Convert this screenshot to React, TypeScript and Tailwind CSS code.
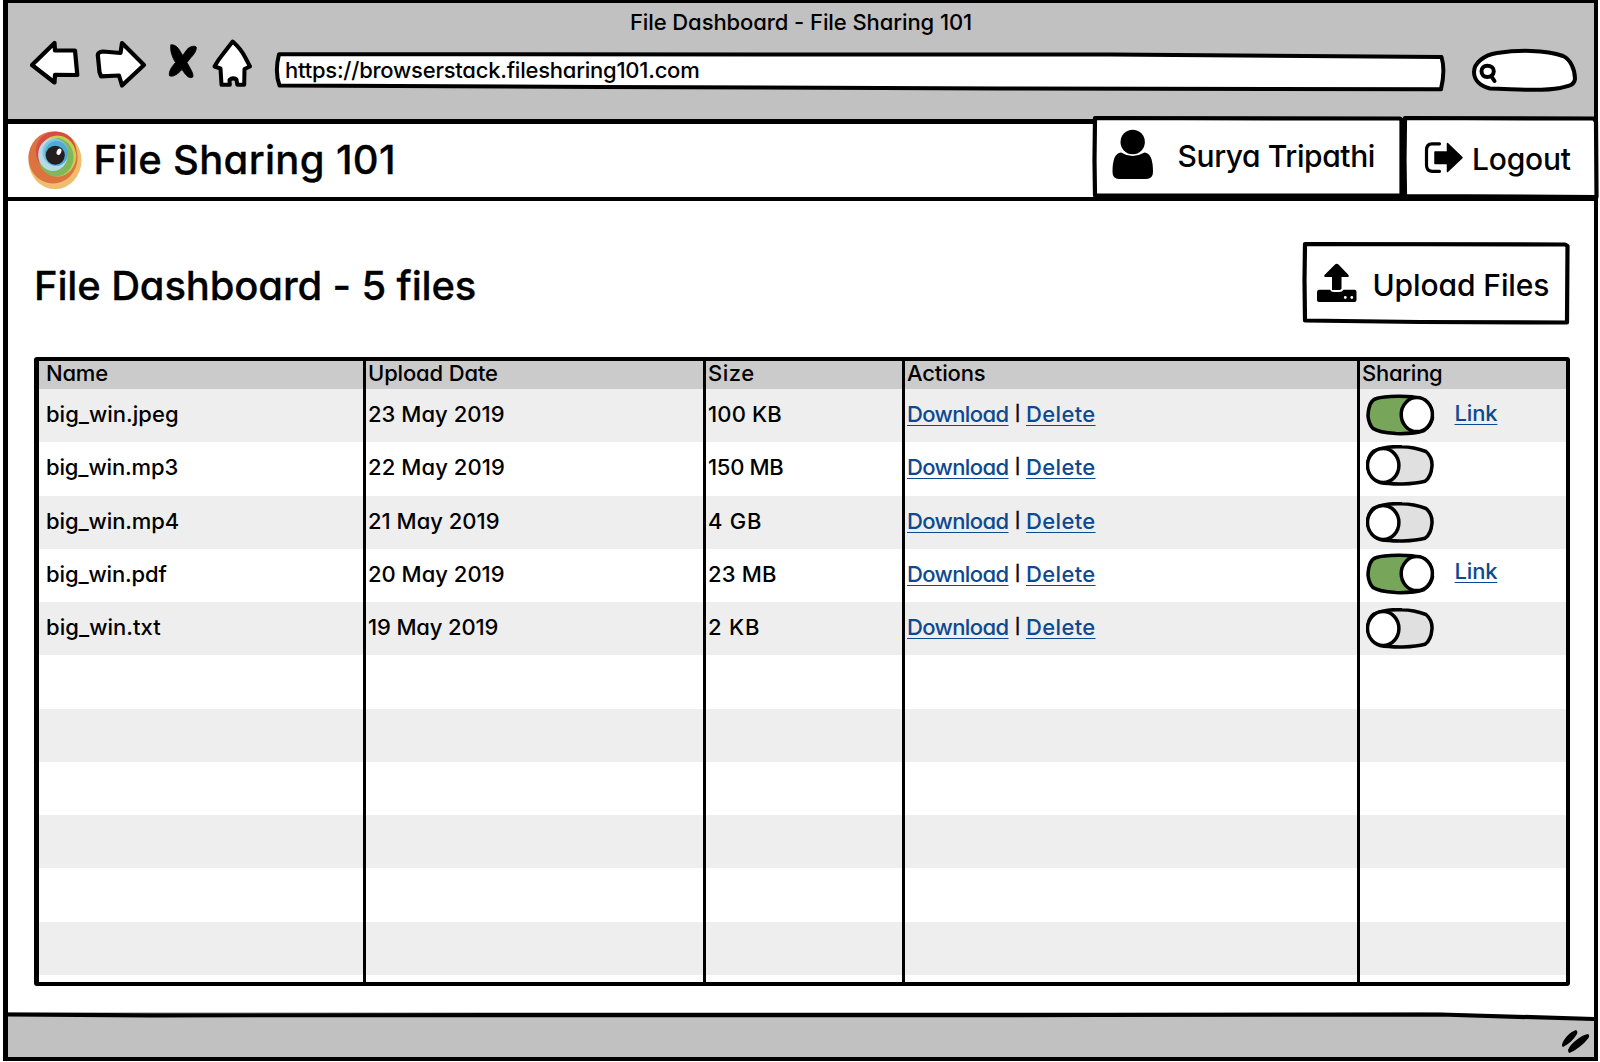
import type { ReactNode } from "react";

type FileRow = {
  name: string;
  nameCls: string;
  date: string;
  dateCls: string;
  size: string;
  sizeCls: string;
  shared: boolean;
  toggleCls: string;
  linkCls: string;
};

const files: FileRow[] = [
  { name: "big_win.jpeg", nameCls: "tracking-[0.02px]", date: "23 May 2019", dateCls: "tracking-[0.04px]", size: "100 KB", sizeCls: "tracking-[0.15px]", shared: true, toggleCls: "mt-[5px]", linkCls: "leading-[48px]" },
  { name: "big_win.mp3", nameCls: "tracking-[-0.14px]", date: "22 May 2019", dateCls: "tracking-[0.1px]", size: "150 MB", sizeCls: "tracking-[-0.3px]", shared: false, toggleCls: "mt-[3px]", linkCls: "" },
  { name: "big_win.mp4", nameCls: "tracking-[-0.1px]", date: "21 May 2019", dateCls: "tracking-[0px]", size: "4 GB", sizeCls: "tracking-[0.75px]", shared: false, toggleCls: "mt-[6.5px]", linkCls: "" },
  { name: "big_win.pdf", nameCls: "tracking-[-0.13px]", date: "20 May 2019", dateCls: "tracking-[0px]", size: "23 MB", sizeCls: "tracking-[0.2px]", shared: true, toggleCls: "mt-[4px]", linkCls: "leading-[44px]" },
  { name: "big_win.txt", nameCls: "tracking-[0.05px]", date: "19 May 2019", dateCls: "tracking-[-0.15px]", size: "2 KB", sizeCls: "tracking-[0.82px]", shared: false, toggleCls: "mt-[6px]", linkCls: "" },
];

const emptyRows = [5, 6, 7, 8, 9, 10];
const grid = "grid grid-cols-[324px_340px_199px_455px_1fr]";
const cell = "border-l-[3px] border-black pl-[2px]";

function Sketch({ box, cls, children }: { box: string; cls: string; children: ReactNode }) {
  return (
    <svg viewBox={box} className={cls} fill="none" stroke="#000" strokeLinejoin="round" strokeLinecap="round">
      {children}
    </svg>
  );
}

function Eye() {
  return (
    <svg viewBox="28 130 54 60" className="mt-[6px] ml-[20px] h-[60px] w-[54px] shrink-0">
      <ellipse cx="55" cy="160.3" rx="26.5" ry="28.8" fill="#f0bc6e" />
      <ellipse cx="53" cy="157.6" rx="24.6" ry="26" fill="#dc7440" />
      <ellipse cx="56" cy="151.5" rx="20.3" ry="20" fill="#d94b45" />
      <ellipse cx="57.4" cy="156" rx="18.8" ry="20.5" fill="#c5d04f" />
      <ellipse cx="56.2" cy="157.2" rx="17.3" ry="19.2" fill="#80b75a" />
      <ellipse cx="53" cy="154.6" rx="14.8" ry="16.4" fill="#b5dbe8" />
      <ellipse cx="55.3" cy="152.2" rx="12.8" ry="13.5" fill="#7fc3e0" />
      <ellipse cx="56.5" cy="153.4" rx="11.6" ry="12.4" fill="#4fabd3" />
      <circle cx="55.3" cy="155.2" r="9.5" fill="#231f20" />
      <ellipse cx="59" cy="151.8" rx="2.2" ry="3.3" fill="#fff" transform="rotate(25 59 151.8)" />
    </svg>
  );
}

function Toggle({ on, cls }: { on: boolean; cls: string }) {
  return (
    <Sketch box="0 0 69 42" cls={`${cls} ml-[3.5px] h-[42px] w-[69px] shrink-0`}>
      {on ? (
        <g strokeWidth="3.5">
          <path d="M2 22C2.3 14 4.5 6 10.500 4.500C18 1.800 45 1 54 4.500C61 6 64.500 11 65.500 16L66.500 24C65.500 29 62 34 58 36.500C50 39.500 38 39.800 30 39.600C22 39 12 38 7 34.500C4.500 32 2.500 27 2 22Z" fill="#77a65b" />
          <ellipse cx="50.800" cy="20.600" rx="15.600" ry="17" fill="#fff" />
        </g>
      ) : (
        <g strokeWidth="3.5">
          <path d="M1.500 20C2 14 4 9 8 6C16 2.500 28 1.300 36 1.800C46 2 53 4 60 6.500C64 10 66.300 16 66 21C65.500 27 64 33 59 36.300C48 39.500 26 39.700 14 37.500C6 33 2 28 1.500 20Z" fill="#e0e0e0" />
          <ellipse cx="17.200" cy="20.500" rx="15.700" ry="17" fill="#fff" />
        </g>
      )}
    </Sketch>
  );
}

const link = "text-[#0c4990] underline decoration-1 underline-offset-[2.5px] [text-decoration-skip-ink:none]";

export default function App() {
  return (
    <div className="h-[1062px] w-[1600px] overflow-hidden bg-white font-[Inter,sans-serif] text-[22px] font-[450] whitespace-pre text-black [font-feature-settings:'cv11']">
      <div className="ml-[3px] flex h-[1061px] w-[1595px] flex-col border-t-[3px] border-r-4 border-b-4 border-l-[5px] border-black">
        {/* browser chrome */}
        <div className="h-[116px] shrink-0 bg-[#c1c1c1]">
          <div className="h-[35px] text-center leading-[39px] tracking-[-0.08px]">File Dashboard - File Sharing 101</div>
          <div className="flex pl-[22px]">
            <Sketch box="30 38 50 56" cls="h-[56px] w-[50px]">
              <path d="M32 65L54.500 43L55 50.500L75 50.500L77.300 75L55 74.800L54.500 82.500Z" fill="#fff" strokeWidth="4.200" />
            </Sketch>
            <Sketch box="94 38 54 56" cls="ml-[14px] h-[56px] w-[54px]">
              <path d="M97.800 55Q98 52 103 51.500L120.500 53L122 43L144 65L122 85.500L119 75.500L101 76.300L99.500 72Z" fill="#fff" strokeWidth="4.200" />
            </Sketch>
            <Sketch box="166 38 34 56" cls="ml-[18px] h-[56px] w-[34px]">
              <path d="M171 45C174 44 178 47 180 51L182.700 55.500L187 49.500C190 46 195 45.500 196.200 47C197 50 194 54.500 191 57.500L187 62.500L190 68C193 73 194 77 192 77.500C188 78.500 185 74 182 69.500C178 74 173 77.500 169.500 75.800C168.500 72 171 67.500 175.500 62.500C172 57 169.500 49 171 45Z" fill="#000" strokeWidth="0.800" />
            </Sketch>
            <Sketch box="210 38 46 56" cls="ml-[10px] h-[56px] w-[46px]">
              <path d="M232.700 41.500Q241 49 245 57L250 66.500L244.500 69L244.200 84.800L237.300 84.800L236.500 79.500Q232.500 77 229.500 80L229.800 84.800L221.500 84.800L220.500 68.500L214.500 66.500Q218 60 223 54Z" fill="#fff" strokeWidth="4" />
            </Sketch>
            <div className="relative ml-[16px] h-[56px] w-[1176px] pl-[13px] leading-[64px] font-medium tracking-[-0.23px]">
              <Sketch box="272 38 1176 56" cls="absolute inset-0 h-[56px] w-[1176px]">
                <path d="M279 54.300L1110 54.500L1441.500 57Q1445.500 70 1441 89.300L1000 88.500L600 87L279.500 85.500Q274.500 72 279 54.300Z" fill="#fff" strokeWidth="4" />
              </Sketch>
              <span className="relative">https://browserstack.filesharing101.com</span>
            </div>
            <Sketch box="1470 38 110 56" cls="ml-[22px] h-[56px] w-[110px]">
              <path d="M1474 72C1474 63 1484 55 1497 53C1517 50 1545 49.500 1563 56C1570 59 1575 69 1575 79C1574 86 1568 86 1560 88C1540 92 1515 89 1490 88.500C1480 86 1474 80 1474 72Z" fill="#fff" strokeWidth="4" />
              <path d="M1487.300 65.700C1491 65.700 1494 68 1493.800 71.300C1493.500 75 1490.500 77 1487.300 77C1484 77 1481.500 75 1481.500 71.300C1481.500 68 1484 65.700 1487.300 65.700ZM1491.500 76.500L1494.500 81" strokeWidth="4" />
            </Sketch>
          </div>
        </div>

        {/* app header */}
        <div className="flex h-[82px] shrink-0 border-t-[5px] border-b-4 border-black">
          <Eye />
          <div className="ml-[11.5px] text-[40px] leading-[71px] font-medium tracking-[0.33px] [-webkit-text-stroke:0.3px_black]">File Sharing 101</div>
          <div className="relative -mt-[10px] ml-auto flex h-[86px] w-[312px] shrink-0 pl-[85.5px]">
            <Sketch box="1092 114 312 86" cls="absolute inset-0 h-[86px] w-[312px]">
              <path d="M1095 118L1400 118.500L1401.500 120L1401.500 195.500L1095 195.500L1094.500 160Z" fill="#fff" strokeWidth="4.200" />
              <circle cx="1132.700" cy="142" r="12.200" fill="#000" stroke="none" />
              <path d="M1121 152.500Q1132.500 159.500 1144.500 152.500Q1153 153 1153 172Q1153 179 1146 179L1119 179Q1112.500 179 1112.500 172Q1112.500 153 1121 152.500Z" fill="#000" stroke="none" />
            </Sketch>
            <span className="relative text-[30px] leading-[84px] font-medium tracking-[-0.4px]">Surya Tripathi</span>
          </div>
          <div className="relative -mt-[10px] -mr-[6px] -ml-[2px] flex h-[88px] w-[198px] shrink-0 pl-[70px]">
            <Sketch box="1402 114 198 88" cls="absolute inset-0 h-[88px] w-[198px]">
              <path d="M1405 118L1594 118.500L1596 122L1596.500 197L1405 196L1404.500 160Z" fill="#fff" strokeWidth="4.200" />
              <path d="M1439.500 143.800L1432 143.800Q1426.500 144 1426.500 150L1426.500 165Q1426.500 171 1432 171.300L1439.500 171.300" strokeWidth="3.200" />
              <path d="M1435 152L1447.500 152L1447.500 143.500L1462 157.600L1447.500 171.500L1447.500 163.500L1435 163.500Z" fill="#000" strokeWidth="1.500" />
            </Sketch>
            <span className="relative text-[30px] leading-[90px] font-medium tracking-[-0.2px]">Logout</span>
          </div>
        </div>

        {/* dashboard */}
        <div className="flex-1 pl-[26px]">
          <div className="flex pt-[39px] pr-[22px]">
            <div className="h-[88px] text-[40px] leading-[91px] font-medium tracking-[-0.15px] [-webkit-text-stroke:0.3px_black]">File Dashboard - 5 files</div>
            <div className="relative ml-auto flex h-[88px] w-[272px] pl-[72.5px]">
              <Sketch box="1300 240 272 88" cls="absolute inset-0 h-[88px] w-[272px]">
                <path d="M1305 244L1565 244.500L1567.500 246L1567 322.500L1420 322L1305 320.500L1304.500 280Z" fill="#fff" strokeWidth="4.200" />
                <path d="M1332 290L1332 277L1325 277Q1323.500 276.500 1324.500 275L1335 264.500Q1336.700 263 1338.500 264.500L1348.500 275Q1349.500 277 1348 277L1341.500 277L1341.500 288.500Q1341 290 1339 290Z" fill="#000" stroke="none" />
                <path d="M1319 289.800L1330 289.800Q1331 292 1334 292L1339 292Q1342.500 292 1343.500 289.800L1355 289.800Q1356.500 290 1356.500 292L1356.500 300Q1356.500 302 1354.500 302L1319 302Q1317 302 1317 300L1317 292Q1317 290 1319 289.800Z" fill="#000" stroke="none" />
                <circle cx="1345.300" cy="297.500" r="1.400" fill="#fff" stroke="none" />
                <circle cx="1351.800" cy="297.500" r="1.400" fill="#fff" stroke="none" />
              </Sketch>
              <span className="relative text-[30px] leading-[90px] font-medium tracking-[-0.1px]">Upload Files</span>
            </div>
          </div>

          <div className="mt-[29px] flex h-[629px] w-[1536px] flex-col rounded-[3px] border-4 border-l-[5px] border-black">
            <div className={`${grid} h-[28px] shrink-0 bg-[#cbcbcb] leading-[24px]`}>
              <div className="pl-[7px] tracking-[-0.2px]">Name</div>
              <div className={`${cell} tracking-[-0.15px]`}>Upload Date</div>
              <div className={`${cell} tracking-[0.5px]`}>Size</div>
              <div className={`${cell} tracking-[-0.15px]`}>Actions</div>
              <div className={`${cell} tracking-[-0.25px]`}>Sharing</div>
            </div>
            {files.map((f) => (
              <div key={f.name} className={`${grid} h-[53.27px] shrink-0 leading-[50px] odd:bg-white even:bg-[#eeeeee]`}>
                <div className={`pl-[7px] ${f.nameCls}`}>{f.name}</div>
                <div className={`${cell} ${f.dateCls}`}>{f.date}</div>
                <div className={`${cell} ${f.sizeCls}`}>{f.size}</div>
                <div className={`${cell} flex`}>
                  <span className="w-[101px]">
                    <a className={`${link} tracking-[-0.6px]`}>Download</a>
                  </span>
                  <span className="w-[18px] pl-px text-center text-[15px] leading-[48px] [-webkit-text-stroke:0.6px_black]">|</span>
                  <a className={`${link} tracking-[0.35px]`}>Delete</a>
                </div>
                <div className={`${cell} flex`}>
                  <Toggle on={f.shared} cls={f.toggleCls} />
                  {f.shared && <a className={`${link} ml-[20px] tracking-[-0.15px] ${f.linkCls}`}>Link</a>}
                </div>
              </div>
            ))}
            {emptyRows.map((r) => (
              <div key={r} className={`${grid} h-[53.27px] shrink-0 odd:bg-white even:bg-[#eeeeee]`}>
                <div />
                <div className={cell} />
                <div className={cell} />
                <div className={cell} />
                <div className={cell} />
              </div>
            ))}
            <div className={`${grid} flex-1`}>
              <div />
              <div className={cell} />
              <div className={cell} />
              <div className={cell} />
              <div className={cell} />
            </div>
          </div>
        </div>

        {/* status bar */}
        <div className="relative h-[45px] shrink-0 bg-[#c1c1c1]">
          <Sketch box="8 1012 1586 45" cls="absolute inset-0 h-[45px] w-[1586px]">
            <path d="M1420 1012L1594 1012L1594 1018Z" fill="#fff" stroke="none" />
            <path d="M4 1014.500L150 1015.300L1100 1015L1440 1014.500L1600 1019.200" strokeWidth="4.200" />
            <path d="M1562 1045C1563 1039 1570 1032 1576 1030Q1578 1031 1577 1034C1573 1040 1569 1044 1563 1047Q1562 1047 1562 1045ZM1568 1050C1570 1044 1581 1035 1588 1034Q1590 1035 1588.500 1038C1583 1045 1576 1050 1569.500 1053Q1568 1052.500 1568 1050Z" fill="#000" stroke="none" />
          </Sketch>
        </div>
      </div>
    </div>
  );
}
